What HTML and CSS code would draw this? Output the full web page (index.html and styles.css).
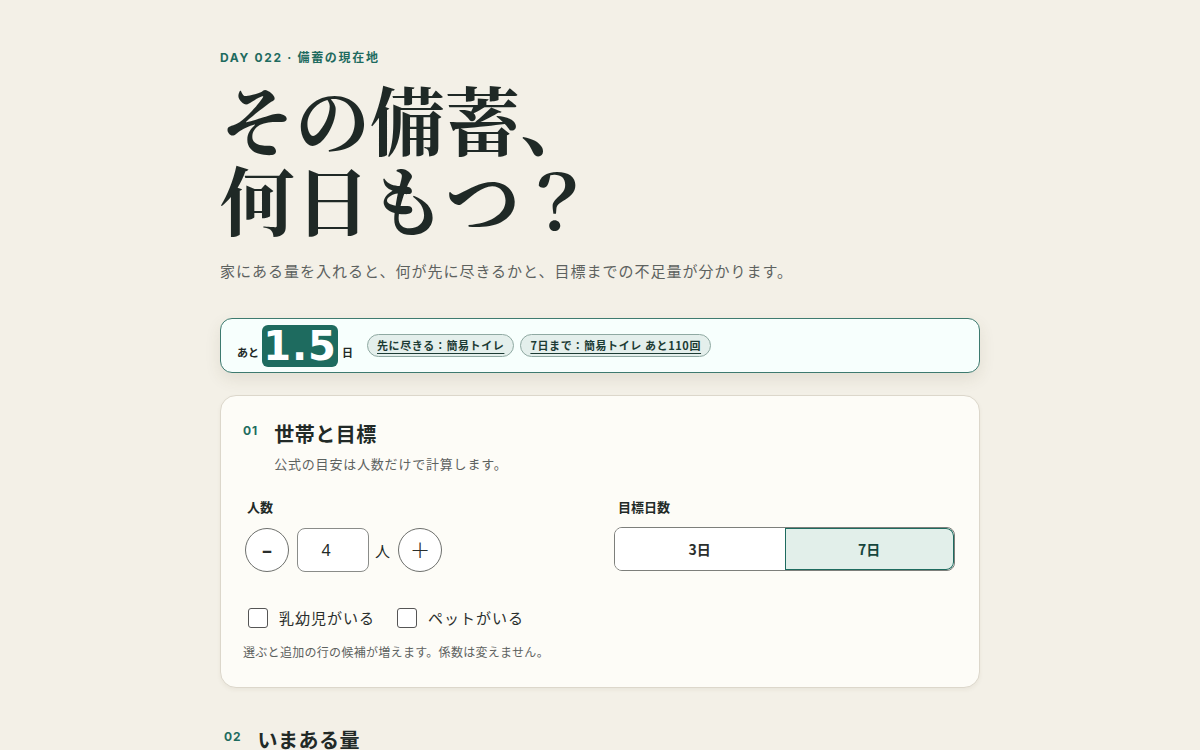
FILE: index.html
```html
<!DOCTYPE html>
<html lang="ja">
<head>
    <meta charset="UTF-8">
    <meta name="viewport" content="width=device-width, initial-scale=1.0">
    <title>その備蓄、何日もつ？</title>
    <link rel="stylesheet" href="styles.css">
</head>
<body>
    <main class="page">
        <header class="hero">
            <p class="eyebrow">DAY 022 · 備蓄の現在地</p>
            <h1 class="title">その備蓄、<br>何日もつ？</h1>
            <p class="lead">家にある量を入れると、何が先に尽きるかと、目標までの不足量が分かります。</p>
        </header>

        <div class="summary">
            <span class="summary-pre">あと</span>
            <span class="days">1.5</span>
            <span class="summary-post">日</span>
            <a href="#" class="chip">先に尽きる：簡易トイレ</a>
            <a href="#" class="chip">7日まで：簡易トイレ あと110回</a>
        </div>

        <section class="card">
            <div class="section-head">
                <span class="num">01</span>
                <div>
                    <h2>世帯と目標</h2>
                    <p class="section-desc">公式の目安は人数だけで計算します。</p>
                </div>
            </div>

            <div class="fields">
                <div class="field">
                    <label class="field-label">人数</label>
                    <div class="stepper">
                        <button class="round minus">–</button>
                        <input class="count" type="text" value="4">
                        <span class="unit">人</span>
                        <button class="round">+</button>
                    </div>
                </div>
                <div class="field">
                    <label class="field-label">目標日数</label>
                    <div class="segment">
                        <button class="seg">3日</button>
                        <button class="seg active">7日</button>
                    </div>
                </div>
            </div>

            <div class="checks">
                <label class="check"><span class="box"></span>乳幼児がいる</label>
                <label class="check"><span class="box"></span>ペットがいる</label>
            </div>
            <p class="note">選ぶと追加の行の候補が増えます。係数は変えません。</p>
        </section>

        <section class="plain">
            <div class="section-head">
                <span class="num">02</span>
                <div>
                    <h2>いまある量</h2>
                </div>
            </div>
        </section>
    </main>
</body>
</html>
```

FILE: styles.css
```css
/* Base */
* {
    margin: 0;
    padding: 0;
    box-sizing: border-box;
}

:root {
    --teal: #1e6b5f;
    --teal-line: #3d7a6f;
    --ink: #222a27;
    --muted: #5d625f;
    --bg: #f3f0e7;
    --card: #fdfcf7;
}

body {
    font-family: "Noto Sans CJK JP", "Noto Sans", sans-serif;
    background: var(--bg);
    color: var(--ink);
}

.page {
    width: 760px;
    margin: 0 auto;
    padding-top: 49px;
}

/* Hero */
.eyebrow {
    font-family: Inter, "Noto Sans CJK JP", sans-serif;
    font-size: 12px;
    font-weight: 700;
    letter-spacing: 0.14em;
    color: var(--teal);
    line-height: 18px;
}

.title {
    font-family: "Noto Serif CJK JP", "Noto Serif CJK", "Liberation Serif", serif;
    font-size: 75px;
    font-weight: 700;
    line-height: 80px;
    margin-top: 11px;
    color: #1f2926;
}

.lead {
    margin-top: 21px;
    font-size: 15px;
    letter-spacing: 1px;
    color: var(--muted);
    line-height: 24px;
}

/* Summary bar */
.summary {
    margin-top: 35px;
    display: flex;
    align-items: center;
    height: 55px;
    padding: 0 16px;
    background: #f7fffd;
    border: 1px solid var(--teal-line);
    border-radius: 12px;
    box-shadow: 0 6px 16px rgba(80, 70, 40, 0.1);
}

.summary-pre,
.summary-post {
    font-size: 11px;
    font-weight: 700;
    margin-top: 12px;
}

.days {
    margin: 0 4px 0 3px;
    background: var(--teal);
    color: #fff;
    font-family: "DejaVu Sans", sans-serif;
    font-weight: 700;
    font-size: 40px;
    line-height: 42px;
    width: 76px;
    text-align: center;
    border-radius: 6px;
    letter-spacing: 0.02em;
}

.summary-post {
    margin-right: 14px;
}

.chip {
    font-size: 11px;
    font-weight: 700;
    letter-spacing: 0.6px;
    color: #1c3b34;
    background: #e4efec;
    border: 1px solid #8fa9a2;
    border-radius: 999px;
    padding: 2px 9px;
    line-height: 17px;
    margin-right: 6px;
    text-decoration: underline;
    text-underline-offset: 3px;
}

/* Cards */
.card {
    margin-top: 22px;
    background: var(--card);
    border: 1px solid #dcd7cb;
    border-radius: 16px;
    padding: 24px 24px 25px 22px;
    box-shadow: 0 2px 4px rgba(80, 70, 40, 0.06);
}

.section-head {
    display: flex;
    gap: 16px;
}

.num {
    font-family: Inter, sans-serif;
    font-size: 12px;
    font-weight: 700;
    color: var(--teal);
    letter-spacing: 0.08em;
    line-height: 18px;
    margin-top: 2px;
}

.section-head h2 {
    font-size: 20px;
    font-weight: 700;
    line-height: 28px;
    letter-spacing: 0.5px;
}

.section-desc {
    margin-top: 6px;
    font-size: 13px;
    letter-spacing: 0.8px;
    color: var(--muted);
    line-height: 20px;
}

.fields {
    display: grid;
    grid-template-columns: 371px 1fr;
    margin-top: 23px;
}

.field-label {
    display: block;
    font-size: 13px;
    font-weight: 700;
    line-height: 20px;
    padding-left: 4px;
}

.stepper {
    display: flex;
    align-items: center;
    margin-top: 11px;
    padding-left: 2px;
}

.round {
    width: 44px;
    height: 44px;
    border: 1px solid #6e706d;
    border-radius: 50%;
    background: #fff;
    font-family: "DejaVu Sans", sans-serif;
    font-size: 24px;
    font-weight: 300;
    color: #2b2f2d;
    line-height: 1;
}

.round.minus {
    font-family: "Noto Sans", sans-serif;
    font-size: 20px;
    font-weight: 700;
}

.count {
    width: 72px;
    height: 44px;
    margin-left: 8px;
    padding-right: 14px;
    border: 1px solid #8a8c89;
    border-radius: 8px;
    background: #fff;
    text-align: center;
    font-family: "Noto Sans", sans-serif;
    font-size: 16px;
    color: var(--ink);
}

.unit {
    font-size: 15px;
    margin: 0 8px 0 6px;
}

.segment {
    display: grid;
    grid-template-columns: 1fr 1fr;
    margin-top: 10px;
    height: 44px;
    border: 1px solid #7d7f7b;
    border-radius: 8px;
    overflow: hidden;
    width: 341px;
}

.seg {
    background: #fff;
    border: none;
    font-family: inherit;
    font-size: 14px;
    font-weight: 700;
    color: #2b2f2d;
}

.seg.active {
    background: #e2efea;
    color: #17463d;
    box-shadow: inset 0 0 0 1px var(--teal);
    border-radius: 0 8px 8px 0;
}

.checks {
    display: flex;
    gap: 22px;
    margin-top: 35px;
    padding-left: 5px;
}

.check {
    display: flex;
    align-items: center;
    gap: 11px;
    font-size: 15px;
    letter-spacing: 1px;
    color: #2b2f2d;
}

.box {
    width: 20px;
    height: 20px;
    border: 1px solid #555;
    border-radius: 3px;
    background: #fff;
}

.note {
    margin-top: 14px;
    font-size: 12px;
    letter-spacing: 0.3px;
    color: var(--muted);
    line-height: 20px;
}

.plain {
    margin-top: 38px;
    padding-left: 4px;
}
```
